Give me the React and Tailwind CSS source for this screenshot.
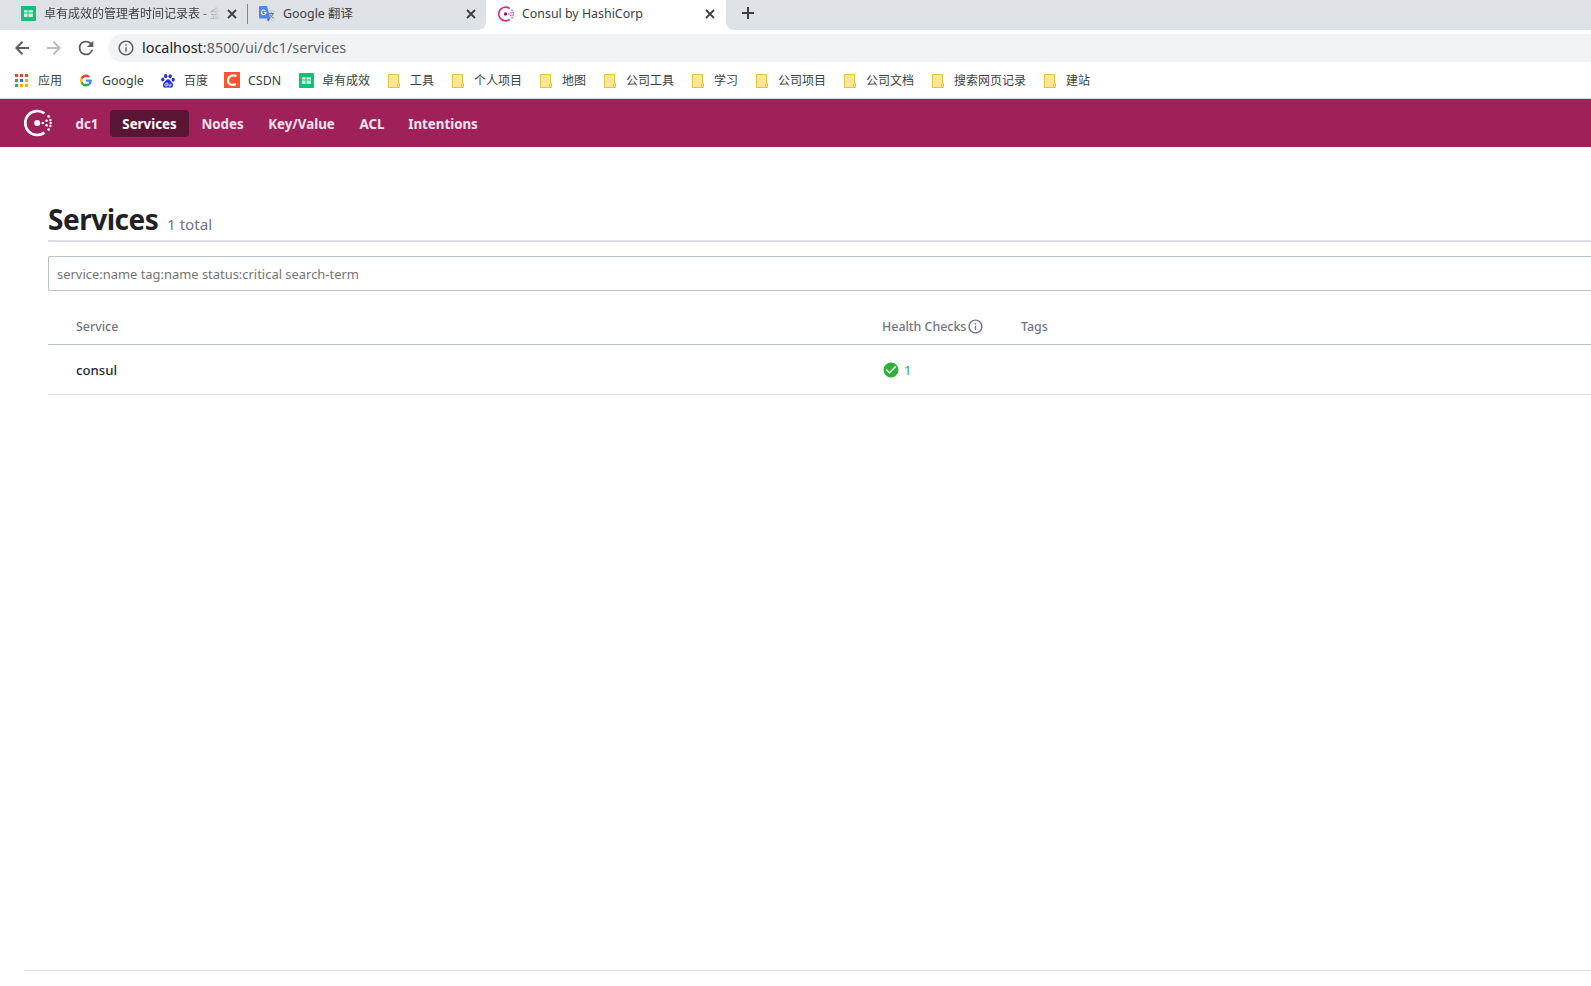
import React from "react";

const bookmarks = [
  { icon: "apps", label: "应用", width: "w-[24px]" },
  { icon: "google", label: "Google", width: "w-[42px]", text: "text-[12.4px]" },
  { icon: "baidu", label: "百度", width: "w-[24px]" },
  { icon: "csdn", label: "CSDN", width: "w-[34px]", text: "text-[12.4px]" },
  { icon: "sheet", label: "卓有成效", width: "w-[48px]" },
  { icon: "folder", label: "工具", width: "w-[24px]" },
  { icon: "folder", label: "个人项目", width: "w-[48px]" },
  { icon: "folder", label: "地图", width: "w-[24px]" },
  { icon: "folder", label: "公司工具", width: "w-[48px]" },
  { icon: "folder", label: "学习", width: "w-[24px]" },
  { icon: "folder", label: "公司项目", width: "w-[48px]" },
  { icon: "folder", label: "公司文档", width: "w-[48px]" },
  { icon: "folder", label: "搜索网页记录", width: "w-[72px]" },
  { icon: "folder", label: "建站", width: "w-[24px]" },
];

const navItems = [
  { label: "dc1", width: "w-[46px]" },
  { label: "Services", width: "w-[79px]", active: true },
  { label: "Nodes", width: "w-[67px]" },
  { label: "Key/Value", width: "w-[91px]" },
  { label: "ACL", width: "w-[50px]" },
  { label: "Intentions", width: "w-[92px]" },
];

const SheetIcon = () => (
  <svg width="15" height="15" viewBox="0 0 15 15" className="shrink-0">
    <rect width="15" height="15" rx="0.8" fill="#13c07a" />
    <path d="M3 4.200h3.600v2.400H3zM7.500 4.200H12v2.400H7.500zM3 7.500h3.600v3.500H3zM7.500 7.500H12v3.500H7.500z" fill="#cdf5e2" />
  </svg>
);

const ConsulLogo = ({ size, ring, dot }) => (
  <svg width={size} height={size} viewBox="0 0 28 28" className="shrink-0">
    <path d="M20.4 4.400A12 12 0 1 0 20.4 23.6" fill="none" stroke={ring} strokeWidth="2.700" />
    <circle cx="13.200" cy="14" r="3" fill={dot} />
    <g fill={ring}>
      <circle cx="18.800" cy="14" r="1.300" />
      <circle cx="22.600" cy="11.800" r="1.300" />
      <circle cx="22.600" cy="16.200" r="1.300" />
      <circle cx="26.400" cy="11" r="1.200" />
      <circle cx="26.600" cy="14" r="1.200" />
      <circle cx="26.400" cy="17" r="1.200" />
      <circle cx="24.600" cy="7.400" r="1.300" />
      <circle cx="24.600" cy="20.600" r="1.300" />
    </g>
  </svg>
);

const CloseIcon = () => (
  <svg width="10" height="10" viewBox="0 0 10 10" className="shrink-0">
    <path d="M1 1l8 8M9 1L1 9" stroke="#3c4043" strokeWidth="1.8" />
  </svg>
);

const InfoIcon = ({ size, color }) => (
  <svg width={size} height={size} viewBox="0 0 24 24" fill={color} className="shrink-0">
    <path d="M11 17h2v-6h-2zm1-15C6.480 2 2 6.480 2 12s4.480 10 10 10 10-4.480 10-10S17.520 2 12 2zm0 18c-4.410 0-8-3.590-8-8s3.590-8 8-8 8 3.590 8 8-3.590 8-8 8zM11 9h2V7h-2z" />
  </svg>
);

const GoogleIcon = () => (
  <svg width="12" height="13" viewBox="0 0 48 48">
    <path fill="#EA4335" d="M24 9.500c3.540 0 6.710 1.220 9.210 3.600l6.850-6.850C35.900 2.380 30.470 0 24 0 14.620 0 6.510 5.380 2.560 13.220l7.980 6.190C12.430 13.720 17.740 9.500 24 9.500z" />
    <path fill="#4285F4" d="M46.980 24.550c0-1.570-.15-3.090-.38-4.550H24v9.020h12.940c-.58 2.960-2.260 5.480-4.780 7.180l7.730 6c4.510-4.180 7.090-10.360 7.090-17.650z" />
    <path fill="#FBBC05" d="M10.530 28.590c-.48-1.450-.76-2.990-.76-4.590s.27-3.140.76-4.590l-7.980-6.190C.92 16.460 0 20.120 0 24s.92 7.540 2.560 10.780z" />
    <path fill="#34A853" d="M24 48c6.480 0 11.930-2.130 15.890-5.810l-7.730-6c-2.150 1.450-4.920 2.300-8.160 2.300-6.260 0-11.570-4.220-13.470-9.910l-7.980 6.190C6.510 42.620 14.620 48 24 48z" />
  </svg>
);

const TranslateIcon = () => (
  <svg width="16" height="16" viewBox="0 0 16 16" className="shrink-0">
    <path d="M6 4h9.500v11.500H9z" fill="#d5d6d8" />
    <path d="M10 7.500h5M12.300 6.500v1M14 7.500c-.5 2-1.800 3.500-3.500 4.500M11.200 8.500c.5 1.500 1.800 2.800 3.200 3.500" stroke="#607d8b" strokeWidth="1" fill="none" />
    <path d="M1 0h7l3.200 12.500H1a1 1 0 0 1-1-1V1a1 1 0 0 1 1-1z" fill="#4a86f0" />
    <path d="M8 12.500h3.200l-2.200 3z" fill="#3a4fd0" />
    <path d="M6.500 4.900A2.300 2.300 0 1 0 7 6.500H4.900" stroke="#fff" strokeWidth="1.100" fill="none" />
  </svg>
);

const BaiduIcon = () => (
  <svg width="14" height="14" viewBox="0 0 14 14" fill="#2932e1">
    <ellipse cx="4.700" cy="2.200" rx="1.700" ry="2.100" />
    <ellipse cx="9.200" cy="2.300" rx="1.700" ry="2.100" />
    <ellipse cx="1.800" cy="5.600" rx="1.600" ry="2" />
    <ellipse cx="12.200" cy="5.800" rx="1.600" ry="2" />
    <path d="M7 5.200c1.700 0 2.300 1.800 3.600 2.900 1.900 1.600 2.300 5.500-.8 5.700-1 .1-1.800-.2-2.800-.2s-1.800.3-2.800.2c-3.100-.2-2.700-4.100-.8-5.700C4.700 7 5.300 5.200 7 5.200z" />
    <path d="M6.200 8.400v3.600H4.800a1 1 0 0 1 0-2.300h1.400M7.900 9.700v1.700c0 .4.200.6.600.6h1.300V9.700" stroke="#fff" strokeWidth=".8" fill="none" />
  </svg>
);

const AppsIcon = () => (
  <svg width="14" height="14" viewBox="0 0 14 14" className="shrink-0">
    <path d="M0 0h3v3H0zM5 0h3v3H5zM10 0h3v3h-3z" fill="#ea4335" />
    <path d="M0 5h3v3H0zM0 10h3v3H0z" fill="#34a853" />
    <path d="M5 5h3v3H5z" fill="#1a73e8" />
    <path d="M10 5h3v3h-3zM5 10h3v3H5zM10 10h3v3h-3z" fill="#fbab08" />
  </svg>
);

const FolderIcon = () => (
  <svg width="12" height="14" viewBox="0 0 12 14">
    <path d="M.5.500h10v9h1v4H.500z" fill="#ffe793" stroke="#e8c23c" />
    <path d="M9.500 13.500v-3.500h1" fill="none" stroke="#e8c23c" />
  </svg>
);

const CsdnIcon = () => (
  <svg width="16" height="16" viewBox="0 0 16 16">
    <path d="M0 0h16v16H0z" fill="#fc5531" />
    <path d="M12.500 4.100C9 2.300 4.500 3.600 4 8.200c-.3 4.300 3.500 5.500 7.800 3.900" fill="none" stroke="#fff" strokeWidth="2.200" />
  </svg>
);

const icons = {
  apps: AppsIcon,
  google: GoogleIcon,
  baidu: BaiduIcon,
  csdn: CsdnIcon,
  sheet: SheetIcon,
  folder: FolderIcon,
};

const TabStrip = () => (
  <div className="flex h-[30px] bg-white text-[12px] leading-[27px] text-[#3c4043]">
    {/* background tabs */}
    <div className="flex w-[486px] rounded-br-[8px] bg-[#dee1e6]">
      <div className="flex h-[27px] w-[247px] items-center pl-[21px]">
        <SheetIcon />
        <span className="ml-2 w-[176px] overflow-hidden whitespace-nowrap [mask-image:linear-gradient(to_right,black_88%,transparent)]">
          卓有成效的管理者时间记录表 - 金
        </span>
        <span className="ml-[7px]"><CloseIcon /></span>
      </div>
      <div className="mt-1 h-5 w-px bg-[#80868b]" />
      <div className="flex h-[27px] items-center pl-[11px]">
        <TranslateIcon />
        <span className="ml-2 w-[176px] whitespace-nowrap text-[12.4px]">Google 翻译</span>
        <span className="ml-[7px]"><CloseIcon /></span>
      </div>
    </div>
    {/* active tab */}
    <div className="flex h-[27px] w-[240px] items-center pl-[12px]">
      <ConsulLogo size="16" ring="#d62783" dot="#961d59" />
      <span className="ml-2 w-[176px] whitespace-nowrap text-[12.4px]">Consul by HashiCorp</span>
      <span className="ml-[7px]"><CloseIcon /></span>
    </div>
    <div className="flex-1 rounded-bl-[8px] bg-[#dee1e6] pl-[16px] pt-[7px]">
      <svg width="12" height="12" viewBox="0 0 12 12">
        <path d="M6 0v12M0 6h12" stroke="#3c4043" strokeWidth="2" />
      </svg>
    </div>
  </div>
);

const Toolbar = () => (
  <div className="flex h-[36px] items-center bg-white pl-[15px]">
    <svg width="15" height="14" viewBox="0 0 15 14" fill="none" stroke="#5a5e62" strokeWidth="2">
      <path d="M14 7H1.500M7.500 .8L1.300 7l6.200 6.200" />
    </svg>
    <svg width="15" height="14" viewBox="0 0 15 14" fill="none" stroke="#babcbe" strokeWidth="2" className="ml-[16px]">
      <path d="M1 7h12.500M7.500 .8L13.700 7l-6.200 6.200" />
    </svg>
    <svg width="22" height="22" viewBox="0 0 24 24" fill="#5a5e62" className="ml-[14px]">
      <path d="M17.650 6.350A7.950 7.950 0 0 0 12 4a8 8 0 1 0 7.730 10h-2.080A6 6 0 1 1 12 6c1.660 0 3.140.69 4.220 1.780L13 11h7V4z" />
    </svg>
    <div className="ml-[11px] flex h-7 flex-1 items-center rounded-l-full bg-[#f1f3f4] pl-[9px]">
      <InfoIcon size="18" color="#5f6368" />
      <span className="ml-[7px] whitespace-nowrap text-[14.4px] text-[#5f6368]">
        <span className="text-[#202124]">localhost</span>:8500/ui/dc1/services
      </span>
    </div>
  </div>
);

const BookmarksBar = () => (
  <div className="flex h-[33px] items-center gap-4 border-b border-[#d5d7da] bg-white pb-[3px] pl-[14px] text-[12px] text-[#3c4043]">
    {bookmarks.map(({ icon, label, width, text }) => {
      const Icon = icons[icon];
      return (
        <div key={label} className="flex shrink-0 items-center gap-2">
          <span className="flex w-4 justify-center"><Icon /></span>
          <span className={`${width} ${text || ""} whitespace-nowrap pt-px`}>{label}</span>
        </div>
      );
    })}
  </div>
);

const ConsulNav = () => (
  <nav className="flex h-12 items-center bg-[#9e2159] pl-6 text-[13.3px] font-bold text-[#f7e3ed]">
    <ConsulLogo size="28" ring="#ffffff" dot="#ffffff" />
    <div className="ml-3 flex">
      {navItems.map(({ label, width, active }) => (
        <a
          key={label}
          className={`${width} flex h-[27px] shrink-0 items-center justify-center whitespace-nowrap rounded pt-[3px] ${active ? "bg-[#5a1434] text-white" : ""}`}
        >
          {label}
        </a>
      ))}
    </div>
  </nav>
);

const ServicesPage = () => (
  <main className="flex flex-1 flex-col bg-white pl-12">
    <header className="mt-[51px] flex h-[44px] items-baseline border-b-2 border-[#dce0e6]">
      <h1 className="w-[110px] whitespace-nowrap text-[28px] font-bold leading-[43px] tracking-[-0.5px] text-[#1f2124]">Services</h1>
      <span className="ml-[9px] text-[15.2px] text-[#6f7682]">1 total</span>
    </header>
    <div className="mt-[14px] flex h-[35px] items-center rounded-l-[2px] border border-r-0 border-[#bac1cc] pl-2 pt-[3px] text-[12.93px] text-[#757575]">
      service:name tag:name status:critical search-term
    </div>
    <div className="mt-[18px] flex h-[36px] items-center border-b border-[#bac1cc] pl-7 text-[12.4px] font-medium text-[#6f7682]">
      <span className="w-[806px] pt-[2px]">Service</span>
      <span className="flex w-[139px] items-center whitespace-nowrap">
        <span className="w-[85px] pt-[2px]">Health Checks</span>
        <InfoIcon size="17" color="#6f7682" />
      </span>
      <span className="pt-[2px]">Tags</span>
    </div>
    <div className="flex h-[50px] items-center border-b border-[#dce0e6] pl-7 text-[13.2px]">
      <span className="w-[806px] pt-[3px] font-medium text-[#252937]">consul</span>
      <svg width="18" height="18" viewBox="0 0 24 24" fill="#2eb039">
        <path d="M12 2a10 10 0 1 0 0 20 10 10 0 0 0 0-20zm-2 15l-5-5 1.410-1.410L10 14.170l7.590-7.590L19 8z" />
      </svg>
      <span className="ml-1 pt-[3px] text-[#2eb039]">1</span>
    </div>
  </main>
);

const App = () => {
  return (
    <div className="flex h-[986px] w-full flex-col overflow-hidden bg-white font-['Noto_Sans','Noto_Sans_CJK_SC',sans-serif]">
      <TabStrip />
      <Toolbar />
      <BookmarksBar />
      <ConsulNav />
      <ServicesPage />
      <footer className="ml-6 h-4 border-t border-[#dce0e6]" />
    </div>
  );
};

export default App;
